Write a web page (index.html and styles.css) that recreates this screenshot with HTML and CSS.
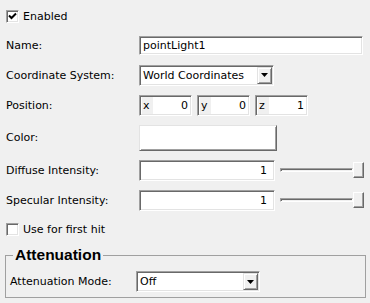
FILE: index.html
```html
<!DOCTYPE html>
<html lang="en">
<head>
    <meta charset="UTF-8">
    <title>Point Light</title>
    <link rel="stylesheet" href="styles.css">
</head>
<body>
    <div class="panel">
        <div class="check-row">
            <span class="check">
                <svg width="9" height="9" viewBox="0 0 9 9"><path d="M1 3.5 L3.5 6 L8 1.5" fill="none" stroke="#000" stroke-width="2"/></svg>
            </span>
            <span>Enabled</span>
        </div>

        <div class="row">
            <span class="label">Name:</span>
            <div class="field name-field">pointLight1</div>
        </div>

        <div class="row">
            <span class="label">Coordinate System:</span>
            <div class="combo coord-combo">
                <span class="combo-text">World Coordinates</span>
                <span class="combo-btn"><svg width="7" height="4" viewBox="0 0 7 4"><path d="M0 0 H7 L3.5 4 Z" fill="#000"/></svg></span>
            </div>
        </div>

        <div class="row">
            <span class="label">Position:</span>
            <div class="vec">
                <div class="field vec-field"><span class="axis">x</span><span class="val">0</span></div>
                <div class="field vec-field"><span class="axis">y</span><span class="val">0</span></div>
                <div class="field vec-field"><span class="axis">z</span><span class="val">1</span></div>
            </div>
        </div>

        <div class="row row-color">
            <span class="label">Color:</span>
            <div class="color-btn"></div>
        </div>

        <div class="row">
            <span class="label">Diffuse Intensity:</span>
            <div class="field num-field">1</div>
            <div class="slider"><div class="groove"></div><div class="handle"></div></div>
        </div>

        <div class="row">
            <span class="label">Specular Intensity:</span>
            <div class="field num-field">1</div>
            <div class="slider"><div class="groove"></div><div class="handle"></div></div>
        </div>

        <div class="check-row">
            <span class="check"></span>
            <span>Use for first hit</span>
        </div>

        <fieldset class="group">
            <legend>Attenuation</legend>
            <div class="group-row">
                <span class="group-label">Attenuation Mode:</span>
                <div class="combo mode-combo">
                    <span class="combo-text">Off</span>
                    <span class="combo-btn"><svg width="7" height="4" viewBox="0 0 7 4"><path d="M0 0 H7 L3.5 4 Z" fill="#000"/></svg></span>
                </div>
            </div>
        </fieldset>
    </div>
</body>
</html>
```

FILE: styles.css
```css
/* styles.css */

body {
    margin: 0;
    background-color: #f0f0f0;
    font-family: "DejaVu Sans", sans-serif;
    font-size: 11px;
    color: #000;
}

.panel {
    padding: 2px 5px 0 6px;
}

.check-row {
    height: 28px;
    display: flex;
    align-items: center;
    gap: 4px;
}

.check {
    width: 13px;
    height: 13px;
    box-sizing: border-box;
    background-color: #fff;
    border: 1px solid;
    border-color: #a0a0a0 #fff #fff #a0a0a0;
    box-shadow: inset 1px 1px #696969, inset -1px -1px #e3e3e3;
    display: flex;
    align-items: center;
    justify-content: center;
}

.row {
    height: 30px;
    display: flex;
    align-items: center;
}

.row-color {
    height: 35px;
}

.label {
    width: 133px;
    flex-shrink: 0;
}

.field {
    box-sizing: border-box;
    background-color: #fff;
    border: 1px solid;
    border-color: #a0a0a0 #fff #fff #a0a0a0;
    box-shadow: inset 1px 1px #696969, inset -1px -1px #e3e3e3;
    display: flex;
    align-items: center;
    padding: 0 3px;
}

.name-field {
    width: 224px;
    height: 19px;
}

.vec {
    display: flex;
    gap: 5px;
}

.vec-field {
    width: 53px;
    height: 21px;
    padding: 0 3px 0 2px;
}

.axis {
    width: 10px;
    align-self: stretch;
    display: flex;
    align-items: center;
    padding-left: 1px;
    background-color: #f0f0f0;
    margin: 1px 0;
}

.val {
    flex: 1;
    text-align: right;
}

.num-field {
    width: 136px;
    height: 21px;
    justify-content: flex-end;
    padding-right: 7px;
}

.combo {
    box-sizing: border-box;
    height: 21px;
    background-color: #fff;
    border: 1px solid;
    border-color: #a0a0a0 #fff #fff #a0a0a0;
    box-shadow: inset 1px 1px #696969, inset -1px -1px #e3e3e3;
    display: flex;
    align-items: center;
    padding: 1px 1px 1px 2px;
}

.coord-combo {
    width: 135px;
}

.mode-combo {
    width: 124px;
}

.combo-text {
    flex: 1;
    padding-left: 1px;
}

.combo-btn {
    width: 15px;
    height: 17px;
    box-sizing: border-box;
    background-color: #f0f0f0;
    border: 1px solid;
    border-color: #e3e3e3 #696969 #696969 #e3e3e3;
    box-shadow: inset 1px 1px #fff, inset -1px -1px #a0a0a0;
    display: flex;
    align-items: center;
    justify-content: center;
}

.color-btn {
    width: 138px;
    height: 26px;
    box-sizing: border-box;
    background-color: #fff;
    border: 1px solid;
    border-color: #e3e3e3 #696969 #696969 #e3e3e3;
    box-shadow: inset 1px 1px #fff, inset -1px -1px #a0a0a0;
}

.slider {
    display: flex;
    align-items: center;
    margin-left: 5px;
}

.groove {
    width: 73px;
    height: 4px;
    box-sizing: border-box;
    border: 1px solid;
    border-color: #a0a0a0 #fff #fff #a0a0a0;
    box-shadow: inset 1px 1px #696969;
}

.handle {
    width: 11px;
    height: 16px;
    box-sizing: border-box;
    background-color: #f0f0f0;
    border: 1px solid;
    border-color: #fff #696969 #696969 #fff;
    box-shadow: inset -1px -1px #a0a0a0;
}

.group {
    margin: 4px 0 0 -1px;
    width: 361px;
    box-sizing: border-box;
    padding: 0 4px;
    border: 1px solid #a0a0a0;
    min-inline-size: 0;
}

.group legend {
    margin-left: 3px;
    padding: 0 2px;
    font-family: "Liberation Sans", Arial, sans-serif;
    font-weight: bold;
    font-size: 15.5px;
    line-height: 16px;
}

.group-row {
    display: flex;
    align-items: center;
    padding: 8px 0 5px;
}

.group-label {
    width: 126px;
}
```
